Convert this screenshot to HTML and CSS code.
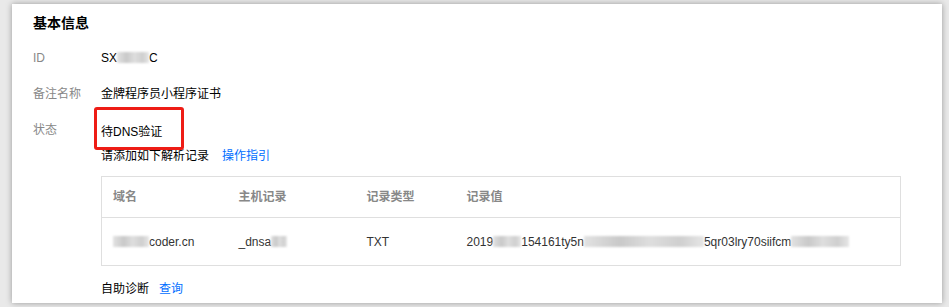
FILE: index.html
```html
<!DOCTYPE html>
<html lang="zh-CN">

<head>
  <meta charset="UTF-8">
  <title>基本信息</title>
  <link rel="stylesheet" href="styles.css">
</head>

<body>
  <div class="panel">
    <h3 class="title">基本信息</h3>
    <div class="row">
      <span class="label">ID</span>
      <span class="value">SX<span class="blur w32"></span>C</span>
    </div>
    <div class="row">
      <span class="label">备注名称</span>
      <span class="value">金牌程序员小程序证书</span>
    </div>
    <div class="row status">
      <span class="label">状态</span>
      <div class="value">
        <p class="state"><span class="mark">待DNS验证</span></p>
        <p class="hint">请添加如下解析记录<a class="link" href="#">操作指引</a></p>
        <table class="records">
          <thead>
            <tr>
              <th class="c1">域名</th>
              <th class="c2">主机记录</th>
              <th class="c3">记录类型</th>
              <th>记录值</th>
            </tr>
          </thead>
          <tbody>
            <tr>
              <td><span class="blur w36"></span>coder.cn</td>
              <td>_dnsa<span class="blur w16"></span></td>
              <td>TXT</td>
              <td>2019<span class="blur w28"></span>154161ty5n<span class="blur w120"></span>5qr03lry70siifcm<span class="blur w58"></span></td>
            </tr>
          </tbody>
        </table>
        <p class="diag">自助诊断<a class="link" href="#">查询</a></p>
      </div>
    </div>
  </div>
</body>

</html>
```

FILE: styles.css
```css
* {
  margin: 0;
  padding: 0;
  box-sizing: border-box;
}

body {
  width: 949px;
  height: 307px;
  overflow: hidden;
  background-color: #e9e9e9;
  padding: 4px 7px 4px 12px;
  font-family: "Liberation Sans", "Noto Sans CJK SC", sans-serif;
  font-size: 12px;
  color: #000;
}

.panel {
  height: 299px;
  background-color: #fff;
  box-shadow: 0 0 6px rgba(0, 0, 0, 0.35);
  padding: 11px 0 0 21px;
  overflow: hidden;
}

.title {
  font-size: 14px;
  font-weight: bold;
  line-height: 16px;
  color: #000;
  margin-bottom: 18px;
}

.row {
  display: flex;
  line-height: 18px;
  margin-bottom: 18px;
}

.label {
  width: 68px;
  flex-shrink: 0;
  color: #888;
}

.value {
  color: #000;
}

.state {
  line-height: 18px;
  margin-top: 2px;
}

.mark {
  position: relative;
}

.mark::before {
  content: "";
  position: absolute;
  left: -7px;
  top: -18px;
  width: 84px;
  height: 37px;
  border: 3px solid #ee1c15;
  border-radius: 3px;
}

.hint {
  line-height: 18px;
  margin-top: 6px;
}

.link {
  color: #006eff;
  text-decoration: none;
  margin-left: 13px;
}

.diag .link {
  margin-left: 10px;
}

.records {
  width: 800px;
  margin-top: 11px;
  border-collapse: collapse;
  border: 1px solid #dfdfdf;
  table-layout: fixed;
}

.records th {
  height: 41px;
  text-align: left;
  font-weight: bold;
  color: #888;
  padding: 0 11px;
  border-bottom: 1px solid #dfdfdf;
}

.records td {
  height: 48px;
  padding: 0 11px;
  color: #333;
  white-space: nowrap;
}

.records .c1 {
  width: 126px;
}

.records .c2 {
  width: 128px;
}

.records .c3 {
  width: 100px;
}

.blur {
  display: inline-block;
  height: 11px;
  vertical-align: -1px;
  background: linear-gradient(90deg, #e2e2e2, #c9c9c9 30%, #dedede 55%, #cfcfcf 80%, #e6e6e6);
  filter: blur(1px);
}

.w16 { width: 16px; }
.w28 { width: 28px; }
.w32 { width: 32px; }
.w36 { width: 36px; }
.w58 { width: 58px; }
.w120 { width: 120px; }

.diag {
  line-height: 18px;
  margin-top: 14px;
}
```
